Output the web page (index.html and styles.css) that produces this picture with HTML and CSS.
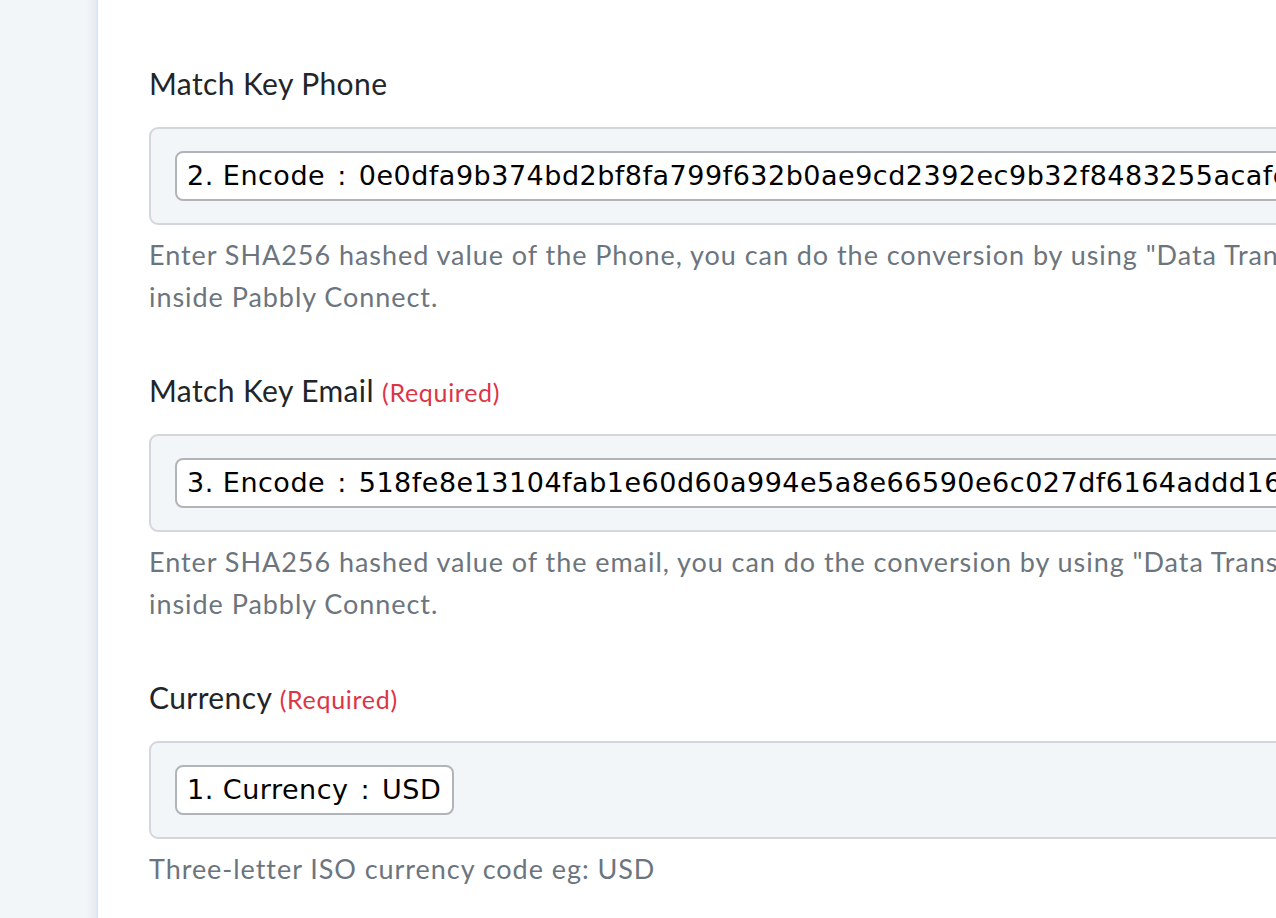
FILE: index.html
```html
<!DOCTYPE html>
<html lang="en">
<head>
<meta charset="utf-8">
<title>Pabbly Connect - Action fields</title>
<link rel="stylesheet" href="styles.css">
</head>
<body>
<div class="layout">
  <aside class="sidebar"></aside>
  <main class="content">
    <p class="help help-cut">Select an event to track here.</p>

    <section class="field">
      <div class="label">Match Key Phone</div>
      <div class="mapbox">
        <span class="chip">2. Encode<span class="sep">:</span>0e0dfa9b374bd2bf8fa799f632b0ae9cd2392ec9b32f8483255acafc3d5e2f1a</span>
      </div>
      <p class="help">Enter SHA256 hashed value of the Phone, you can do the conversion by using "Data Transformer" action<br>inside Pabbly Connect.</p>
    </section>

    <section class="field">
      <div class="label">Match Key Email <span class="req">(Required)</span></div>
      <div class="mapbox">
        <span class="chip">3. Encode<span class="sep">:</span>518fe8e13104fab1e60d60a994e5a8e66590e6c027df6164addd16a2b7c9e04f</span>
      </div>
      <p class="help">Enter SHA256 hashed value of the email, you can do the conversion by using "Data Transformer" action<br>inside Pabbly Connect.</p>
    </section>

    <section class="field">
      <div class="label">Currency <span class="req">(Required)</span></div>
      <div class="mapbox">
        <span class="chip">1. Currency<span class="sep">:</span>USD</span>
      </div>
      <p class="help">Three-letter ISO currency code eg: USD</p>
    </section>
  </main>
</div>
</body>
</html>
```
FILE: styles.css
```css
html, body {
  margin: 0;
  padding: 0;
  background: #ffffff;
  overflow: hidden;
}

.layout {
  display: flex;
  width: 1276px;
  height: 918px;
  overflow: hidden;
}

.sidebar {
  flex: 0 0 96px;
  background: linear-gradient(to right, #f3f6f9 0, #f3f6f9 86px, #e9ecef 95px);
  border-right: 2px solid #dde6f7;
}

.content {
  flex: 0 0 auto;
  width: 1800px;
  padding-left: 51px;
  font-family: Lato, "Noto Sans", sans-serif;
}

.help {
  margin: 9px 0 0 0;
  font-size: 27px;
  line-height: 42px;
  letter-spacing: 0.95px;
  color: #6c757d;
  white-space: nowrap;
}

.help-cut {
  margin-top: -31px;
}

.field {
  margin-top: 52px;
}

.label {
  font-size: 30px;
  line-height: 40px;
  letter-spacing: 0.4px;
  color: #212529;
  margin-bottom: 24px;
}

.req {
  font-size: 25px;
  line-height: 1;
  letter-spacing: 0.7px;
  color: #dc3545;
}

.mapbox {
  display: flex;
  align-items: center;
  height: 94px;
  padding: 0 24px;
  background: #f3f6f9;
  border: 2px solid #d3d7dc;
  border-radius: 9px;
}

.chip {
  display: inline-block;
  height: 46px;
  line-height: 46px;
  padding: 0 11px 0 10px;
  background: #ffffff;
  border: 2px solid #b1b4b8;
  border-radius: 8px;
  font-family: "DejaVu Sans", Verdana, sans-serif;
  font-size: 27px;
  letter-spacing: 0.5px;
  color: #000000;
  white-space: nowrap;
}

.sep {
  margin: 0 12px;
}
```
